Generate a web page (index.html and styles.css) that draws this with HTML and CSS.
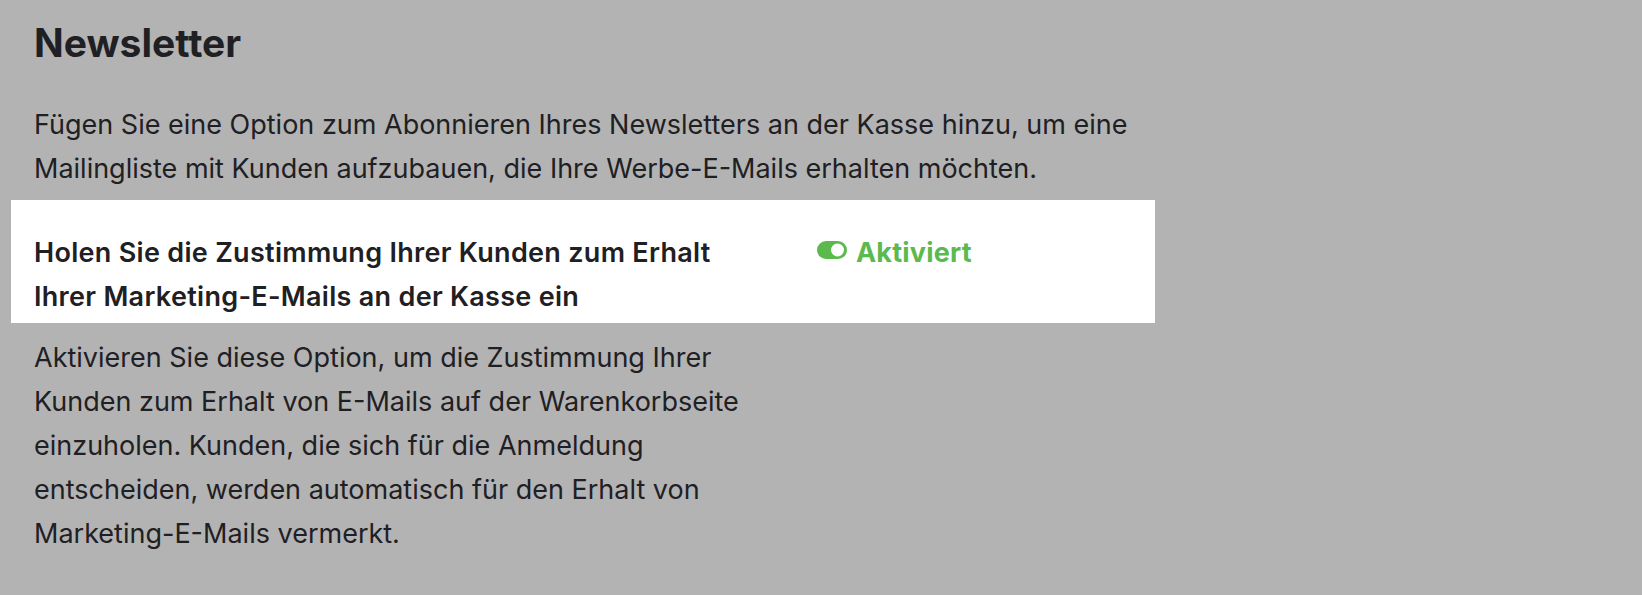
FILE: index.html
```html
<!DOCTYPE html>
<html lang="de">
<head>
<meta charset="utf-8">
<title>Newsletter</title>
<link rel="stylesheet" href="styles.css">
</head>
<body>
<main class="page">
  <h1 class="title">Newsletter</h1>
  <p class="intro">Fügen Sie eine Option zum Abonnieren Ihres Newsletters an der Kasse hinzu, um eine Mailingliste mit Kunden aufzubauen, die Ihre Werbe-E-Mails erhalten möchten.</p>
  <div class="setting">
    <div class="setting-label">Holen Sie die Zustimmung Ihrer Kunden zum Erhalt Ihrer Marketing-E-Mails an der Kasse ein</div>
    <div class="setting-status">
      <svg class="toggle" width="30" height="18" viewBox="0 0 30 18" aria-hidden="true">
        <rect x="0" y="0" width="30" height="18" rx="9" fill="#5cb94d"/>
        <circle cx="20.5" cy="9" r="6.5" fill="#fff"/>
      </svg>
      <span class="status-text">Aktiviert</span>
    </div>
  </div>
  <p class="desc">Aktivieren Sie diese Option, um die Zustimmung Ihrer Kunden zum Erhalt von E-Mails auf der Warenkorbseite einzuholen. Kunden, die sich für die Anmeldung entscheiden, werden automatisch für den Erhalt von Marketing-E-Mails vermerkt.</p>
</main>
</body>
</html>
```

FILE: styles.css
```css
html, body {
  margin: 0;
  padding: 0;
}
body {
  background: #b3b3b3;
  color: #1f2024;
  font-family: Inter, "Noto Sans", sans-serif;
  font-size: 27px;
  line-height: 44px;
}
.page {
  padding: 18px 0 0 34px;
}
.title {
  margin: 0;
  font-size: 39px;
  line-height: 50px;
  font-weight: 700;
}
.intro {
  margin: 35px 0 0;
  width: 1120px;
}
.setting {
  margin: 9px 0 0 -23px;
  width: 1144px;
  box-sizing: border-box;
  background: #fff;
  padding: 31px 0 4px 23px;
  display: grid;
  grid-template-columns: 715px 1fr;
  column-gap: 68px;
  align-items: start;
}
.setting-label {
  font-weight: 600;
  letter-spacing: 0.3px;
}
.setting-status {
  display: flex;
  align-items: center;
  gap: 9px;
  color: #5cb94d;
  font-weight: 700;
  letter-spacing: 0.2px;
}
.toggle {
  display: block;
  margin-top: -6px;
}
.desc {
  margin: 13px 0 0;
  width: 730px;
}
```
